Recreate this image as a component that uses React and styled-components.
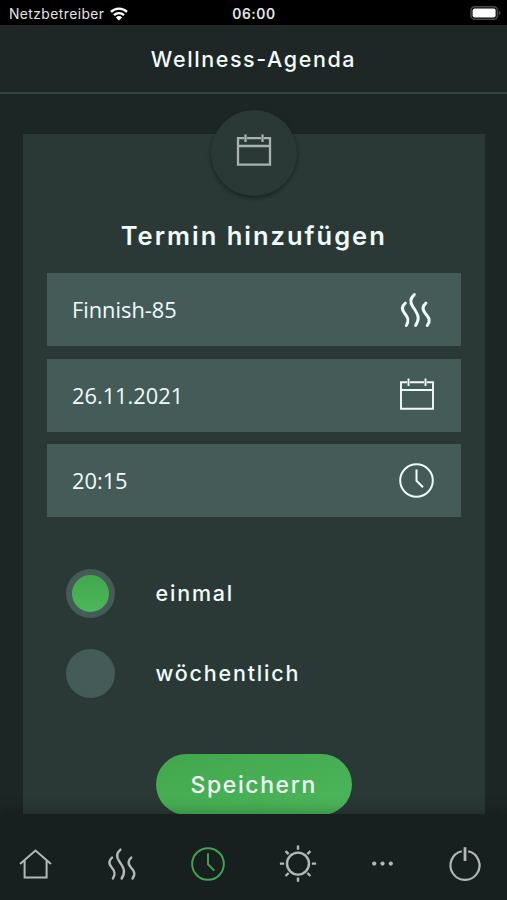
import styled, { createGlobalStyle } from "styled-components";

const GlobalStyle = createGlobalStyle`
  * {
    box-sizing: border-box;
  }
  body {
    margin: 0;
    background-color: #1c2624;
  }
`;

const Screen = styled.div`
  width: 507px;
  height: 900px;
  display: flex;
  flex-direction: column;
  overflow: hidden;
  background-color: #1c2624;
  color: #f1fbf9;
  font-family: "Inter", sans-serif;
`;

const StatusBar = styled.div`
  flex: none;
  height: 25px;
  padding: 2px 6px 0 9px;
  display: grid;
  grid-template-columns: 1fr auto 1fr;
  align-items: center;
  background-color: #000;
  color: #e4e4e4;
  font-size: 13.8px;
  line-height: 20px;
`;
const Carrier = styled.div`
  display: flex;
  align-items: center;
  gap: 6px;
  letter-spacing: 0.45px;
`;
const Time = styled.div`
  padding-right: 2px;
  font-weight: 600;
  letter-spacing: 0.6px;
`;
const Battery = styled.div`
  display: flex;
  justify-content: flex-end;
  padding-bottom: 2px;
`;

const Header = styled.header`
  flex: none;
  height: 69px;
  padding-top: 1px;
  display: flex;
  align-items: center;
  justify-content: center;
  background-color: #1e2725;
  border-bottom: 2px solid #2f4540;
`;
const Title = styled.h1`
  margin: 0;
  font-size: 21.5px;
  font-weight: 500;
  letter-spacing: 1.6px;
`;

const Content = styled.main`
  flex: 1;
  min-height: 0;
  padding: 40px 22px 0 23px;
  display: flex;
`;
const Card = styled.section`
  flex: 1;
  padding: 0 24.5px 0 24px;
  display: flex;
  flex-direction: column;
  align-items: center;
  background-color: #2a3936;
`;
const Badge = styled.div`
  flex: none;
  width: 86px;
  height: 86px;
  margin-top: -24px;
  padding-bottom: 4px;
  display: flex;
  align-items: center;
  justify-content: center;
  border-radius: 50%;
  background-color: #2a3936;
  color: #a9b2b0;
  box-shadow: 0 2px 4px rgba(0, 0, 0, 0.4);
`;
const CardTitle = styled.h2`
  margin: 24px 0 21.4px;
  font-size: 25.5px;
  line-height: 32px;
  font-weight: 600;
  letter-spacing: 2px;
`;

const Fields = styled.div`
  width: 100%;
  display: flex;
  flex-direction: column;
  gap: 12.5px;
`;
const Field = styled.div`
  height: 73px;
  padding: 0 ${(props) => props.$end || "26.5px"} 0 25px;
  display: flex;
  align-items: center;
  justify-content: space-between;
  background-color: #445b58;
  font-family: "Open Sans", sans-serif;
  font-size: 21.8px;
`;

const Options = styled.div`
  width: 100%;
  margin-top: 52px;
  padding-left: 18.5px;
  display: flex;
  flex-direction: column;
  gap: 30.5px;
`;
const Option = styled.label`
  display: flex;
  align-items: center;
  gap: 41px;
  font-size: 21.5px;
  font-weight: 500;
  line-height: 49px;
  letter-spacing: 1.8px;
`;
const Radio = styled.span`
  width: 49px;
  height: 49px;
  border: 6px solid #445b58;
  border-radius: 50%;
  background: ${(props) =>
    props.$checked ? "linear-gradient(#41a84c, #4db75b)" : "#445b58"};
`;

const SaveButton = styled.button`
  flex: none;
  width: 196px;
  height: 61px;
  margin-top: 56px;
  padding: 2px 0 0;
  border: none;
  border-radius: 31px;
  background: linear-gradient(165deg, #42a74c, #4cb75b);
  color: #f1fbf9;
  font-family: inherit;
  font-size: 23px;
  font-weight: 500;
  letter-spacing: 1.6px;
`;

const TabBar = styled.nav`
  flex: none;
  height: 86px;
  padding: 13px 26px 0 19px;
  display: flex;
  align-items: center;
  justify-content: space-between;
  background-color: #18201f;
  box-shadow: 0 -2px 14px rgba(0, 0, 0, 0.28);
  z-index: 1;
`;
const Icon = styled.svg`
  display: block;
  overflow: visible;
  fill: none;
  stroke: currentColor;
  stroke-width: ${(props) => props.$stroke || 2};
  color: ${(props) => props.$color || "inherit"};
`;

const GREY = "#b3b8b7";

const WifiIcon = () => (
  <svg width="18" height="14" viewBox="0 0 18 14">
    <g fill="none" stroke="#fff" strokeWidth="2.4">
      <path d="M1 4.9a11.4 11.4 0 0 1 16 0" />
      <path d="M4 8.2a7.1 7.1 0 0 1 10 0" />
    </g>
    <path d="M9 13.6 5.9 10.4a4.4 4.4 0 0 1 6.2 0z" fill="#fff" />
  </svg>
);

const BatteryIcon = () => (
  <svg width="31" height="14" viewBox="0 0 31 14">
    <rect x="1" y="0.8" width="26.4" height="12.4" rx="3.6" fill="none" stroke="#4a4a4a" strokeWidth="1.5" />
    <rect x="2.6" y="2.4" width="23" height="9.2" rx="2" fill="#fff" />
    <path d="M28.8 4.7q1.8.7 1.8 2.3t-1.8 2.3z" fill="#4a4a4a" />
  </svg>
);

const CalendarIcon = ({ stroke }) => (
  <Icon width="34" height="34" viewBox="0 0 34 34" $stroke={stroke}>
    <path d="M7.1 4.2H1V30.7H33V4.2H26.9M10 4.2H24M1 12H33M8.5 0.4V8M25.5 0.4V8" />
  </Icon>
);

const SteamIcon = ({ color, width = 30, height = 34, stroke = 3 }) => (
  <Icon
    width={width}
    height={height}
    viewBox="0 0 30 34"
    strokeLinecap="round"
    $stroke={stroke}
    $color={color}
  >
    <path d="M4.3 10.2C.6 13.4.5 16.6 3.6 20.2C7.6 24.8 8.2 28 5.3 32.5" />
    <path d="M13.3 1.6C9.2 5.2 9 9.8 12 14C17.8 22 18.8 26 14.6 32.5" />
    <path d="M24.9 10.2C21.2 13.4 21.1 16.6 24.2 20.2C28.8 25.3 29.5 28 26.3 32.5" />
  </Icon>
);

const ClockIcon = ({ color, size = 35 }) => (
  <Icon width={size} height={size} viewBox="0 0 35 35" $color={color}>
    <circle cx="17.5" cy="17.5" r="16.3" />
    <path d="M17.5 6.5V17.8L24 24.3" />
  </Icon>
);

const HomeIcon = () => (
  <Icon width="33" height="30" viewBox="0 0 33 30" $color={GREY}>
    <path d="M1 15 16.5 1.6 32 15M5.6 11.3V28.4H27.6V11.3" />
  </Icon>
);

const SunIcon = () => (
  <Icon width="36" height="38" viewBox="2 0 36 38" $color={GREY} $stroke={2.4}>
    <circle cx="19" cy="18.6" r="11" />
    <path d="M19 .5V4.7M19 32.5V36.7M.9 18.6H5.1M32.9 18.6H37.1M6.6 6.2 9.6 9.2M28.4 28 31.4 31M6.6 31 9.6 28M28.4 9.2 31.4 6.2" />
  </Icon>
);

const MoreIcon = () => (
  <Icon width="21" height="6" viewBox="0 0 21 6" $color={GREY}>
    <g fill="currentColor" stroke="none">
      <circle cx="2.2" cy="2.6" r="2.1" />
      <circle cx="10.5" cy="2.6" r="2.1" />
      <circle cx="18.8" cy="2.6" r="2.1" />
    </g>
  </Icon>
);

const PowerIcon = () => (
  <Icon width="32" height="34" viewBox="0 0 32 34" $color={GREY} $stroke={2.2}>
    <path d="M12.8 4.2A14.5 14.5 0 1 0 19.2 4.2" />
    <path d="M16 .2V14" strokeWidth="2.8" />
  </Icon>
);

const App = () => {
  return (
    <Screen>
      <GlobalStyle />
      <StatusBar>
        <Carrier>
          Netzbetreiber
          <WifiIcon />
        </Carrier>
        <Time>06:00</Time>
        <Battery>
          <BatteryIcon />
        </Battery>
      </StatusBar>
      <Header>
        <Title>Wellness-Agenda</Title>
      </Header>
      <Content>
        <Card>
          <Badge>
            <CalendarIcon stroke={2.3} />
          </Badge>
          <CardTitle>Termin hinzufügen</CardTitle>
          <Fields>
            <Field $end="29.5px">
              Finnish-85
              <SteamIcon />
            </Field>
            <Field>
              26.11.2021
              <CalendarIcon stroke={1.9} />
            </Field>
            <Field>
              20:15
              <ClockIcon />
            </Field>
          </Fields>
          <Options>
            <Option>
              <Radio $checked />
              einmal
            </Option>
            <Option>
              <Radio />
              wöchentlich
            </Option>
          </Options>
          <SaveButton>Speichern</SaveButton>
        </Card>
      </Content>
      <TabBar>
        <HomeIcon />
        <SteamIcon color={GREY} width={28} height={32} stroke={2.6} />
        <ClockIcon color="#41a550" size={34} />
        <SunIcon />
        <MoreIcon />
        <PowerIcon />
      </TabBar>
    </Screen>
  );
};

export default App;
